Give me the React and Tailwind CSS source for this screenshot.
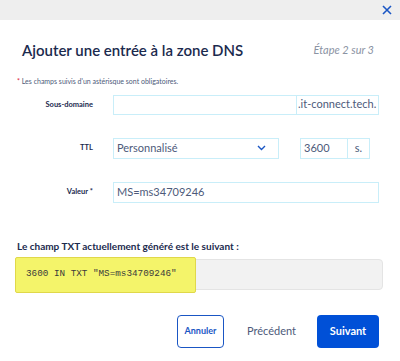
import React from "react";

const Row = ({ label, children, className = "" }) => (
  <div className={`flex items-center ${className}`}>
    <div className="w-[96px] pr-[20px] text-right text-[7.5px] font-bold text-[#1b2a4e]">{label}</div>
    {children}
  </div>
);

export default function App() {
  return (
    <div className="relative h-[361px] w-[400px] overflow-hidden bg-white font-[Lato,sans-serif]">
      <div className="flex h-[20px] items-center justify-end bg-[#eeeeee] pr-[8px]">
        <svg width="10" height="10" viewBox="0 0 10 10" className="text-[#1a56c4]">
          <path d="M1 1 L9 9 M9 1 L1 9" stroke="currentColor" strokeWidth="1.6" fill="none" />
        </svg>
      </div>

      <div className="px-[17px]">
        <div className="mt-[18px] flex items-center justify-between pl-[5px] pr-[9px]">
          <h1 className="text-[15px] font-semibold leading-[24px] text-[#1b2a4e]">Ajouter une entrée à la zone DNS</h1>
          <span className="text-[11px] italic text-[#8b93a3]">Étape 2 sur 3</span>
        </div>

        <p className="mt-[14px] text-[7px] text-[#4d5a7a]">
          <span className="text-[#e0203a]">*</span> Les champs suivis d'un astérisque sont obligatoires.
        </p>

        <Row label="Sous-domaine" className="mt-[8px]">
          <div className="flex h-[20px] w-[266px] border border-[#c9eef9]">
            <div className="flex-1 border-r border-[#c9eef9]" />
            <div className="flex w-[81px] items-center pl-[1px] text-[11px] text-[#4d5a7a]">.it-connect.tech.</div>
          </div>
        </Row>

        <Row label="TTL" className="mt-[23px]">
          <div className="flex h-[21px] w-[166px] items-center justify-between border border-[#c9eef9] pl-[3px] pr-[12px] text-[11px] text-[#4d5a7a]">
            <span>Personnalisé</span>
            <svg width="9" height="6" viewBox="0 0 9 6">
              <path d="M1 1 L4.5 4.5 L8 1" stroke="#1a56c4" strokeWidth="1.4" fill="none" />
            </svg>
          </div>
          <div className="ml-[21px] flex h-[21px] border border-[#c9eef9] text-[11px] text-[#4d5a7a]">
            <div className="flex w-[47px] items-center border-r border-[#c9eef9] pl-[3px]">3600</div>
            <div className="flex w-[21px] items-center justify-center">s.</div>
          </div>
        </Row>

        <Row label="Valeur *" className="mt-[23px]">
          <div className="flex h-[21px] w-[266px] items-center border border-[#c9eef9] pl-[3px] text-[11px] text-[#4d5a7a]">
            MS=ms34709246
          </div>
        </Row>

        <p className="mt-[36px] text-[10px] font-bold text-[#1b2a4e]">Le champ TXT actuellement généré est le suivant :</p>

        <div className="relative mt-[5px] flex h-[31px] items-center rounded-[4px] border border-[#e4e4e4] bg-[#f2f2f2] pl-[8px]">
          <div className="absolute left-[-3px] top-[-3px] h-[36px] w-[181px] rounded-[2px] border border-[#e0d84a] bg-[#f4f46a]" />
          <span className="relative font-['Liberation_Mono',monospace] text-[9.3px] text-[#3b3b3b]">3600 IN TXT "MS=ms34709246"</span>
        </div>

        <div className="mt-[25px] flex items-center justify-end pr-[4px]">
          <button className="flex h-[33px] w-[47px] items-center justify-center rounded-[4px] border-[1.5px] border-[#1a56c4] text-[9px] font-bold text-[#1a56c4]">
            Annuler
          </button>
          <span className="ml-[23px] text-[11px] text-[#4d5a7a]">Précédent</span>
          <button className="ml-[21px] flex h-[33px] w-[62px] items-center justify-center rounded-[4px] bg-[#0050d7] text-[11px] font-bold text-white">
            Suivant
          </button>
        </div>
      </div>
    </div>
  );
}
